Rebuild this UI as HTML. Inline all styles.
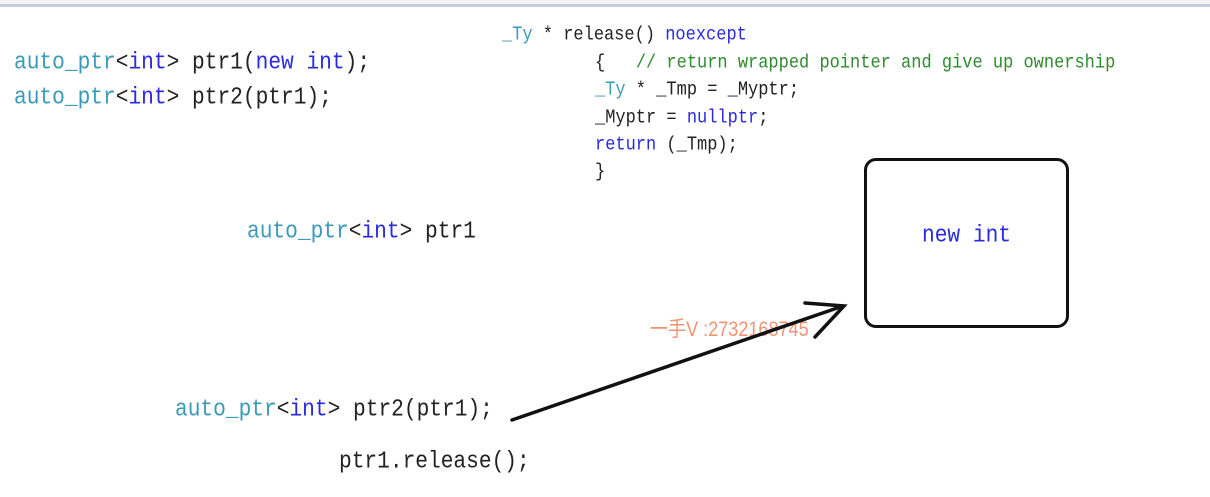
<!DOCTYPE html>
<html><head><meta charset="utf-8"><style>
html,body{margin:0;padding:0;background:#fff;width:1210px;height:497px;overflow:hidden;position:relative}
.t{position:absolute;white-space:pre;font-family:"Liberation Mono","Noto Sans CJK SC",monospace;color:#222;line-height:1;transform:scaleY(1.12);transform-origin:left center}
.b{font-size:21.2px;letter-spacing:0px}
.s{font-size:17px;letter-spacing:0px}
.c{color:#3a9ab8}.k{color:#2a2ae0}.g{color:#2e8b2e}
</style></head><body>
<div style="position:absolute;left:0;top:0;width:1210px;height:4px;background:#f2f4f6"></div>
<div style="position:absolute;left:0;top:4px;width:1210px;height:3px;background:#c5cbd8"></div>

<div class="t b" style="left:14px;top:53px"><span class="c">auto_ptr</span>&lt;<span class="k">int</span>&gt; ptr1(<span class="k">new int</span>);</div>
<div class="t b" style="left:14px;top:88px"><span class="c">auto_ptr</span>&lt;<span class="k">int</span>&gt; ptr2(ptr1);</div>

<div class="t s" style="left:502px;top:27px"><span class="c">_Ty</span> * release() <span class="k">noexcept</span></div>
<div class="t s" style="left:595px;top:55px">{   <span class="g">// return wrapped pointer and give up ownership</span></div>
<div class="t s" style="left:595px;top:82px"><span class="c">_Ty</span> * _Tmp = _Myptr;</div>
<div class="t s" style="left:595px;top:110px">_Myptr = <span class="k">nullptr</span>;</div>
<div class="t s" style="left:595px;top:137px"><span class="k">return</span> (_Tmp);</div>
<div class="t s" style="left:595px;top:164px">}</div>

<div class="t b" style="left:247px;top:222px"><span class="c">auto_ptr</span>&lt;<span class="k">int</span>&gt; ptr1</div>
<div class="t b" style="left:175px;top:400px"><span class="c">auto_ptr</span>&lt;<span class="k">int</span>&gt; ptr2(ptr1);</div>
<div class="t b" style="left:339px;top:452px">ptr1.release();</div>

<div style="position:absolute;left:864px;top:158px;width:199px;height:164px;border:3px solid #111;border-radius:12px"></div>
<div class="t b k" style="left:922px;top:226px">new int</div>

<div style="position:absolute;left:650px;top:313px;font-family:'Liberation Sans','Noto Sans CJK SC',sans-serif;font-size:21px;color:rgba(235,120,80,0.8);transform:scaleX(0.86);transform-origin:left;white-space:nowrap">一手V :2732168745</div>

<svg width="1210" height="497" style="position:absolute;left:0;top:0" fill="none" stroke="#111" stroke-width="3.5" stroke-linecap="round">
<path d="M512 420 L843 306"/>
<path d="M805 303 L844 306 L815 337"/>
</svg>
</body></html>
